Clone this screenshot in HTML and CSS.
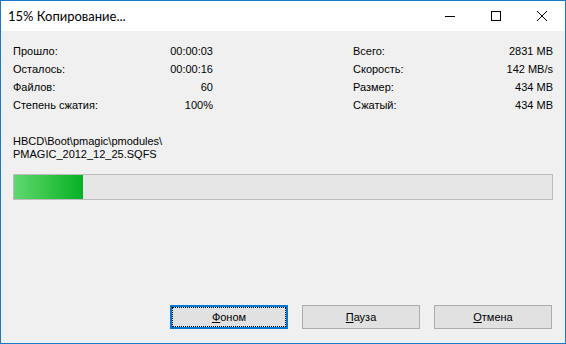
FILE: index.html
```html
<!DOCTYPE html>
<html>
<head>
	<title>15% Копирование...</title>
	<link rel="stylesheet" href="styles.css">
</head>
<body>
	<div class="window">
		<div class="titlebar">
			<span class="title">15% Копирование...</span>
			<div class="controls">
				<div class="ctl">
					<svg width="10" height="10" viewBox="0 0 10 10"><path d="M0 5.5H10" stroke="#000" stroke-width="1"/></svg>
				</div>
				<div class="ctl">
					<svg width="10" height="10" viewBox="0 0 10 10"><rect x="0.5" y="0.5" width="9" height="9" fill="none" stroke="#000" stroke-width="1"/></svg>
				</div>
				<div class="ctl">
					<svg width="10" height="10" viewBox="0 0 10 10"><path d="M0 0L10 10M10 0L0 10" stroke="#000" stroke-width="1"/></svg>
				</div>
			</div>
		</div>

		<div class="content">
			<div class="stats">
				<div class="group">
					<div class="row"><span>Прошло:</span><span>00:00:03</span></div>
					<div class="row"><span>Осталось:</span><span>00:00:16</span></div>
					<div class="row"><span>Файлов:</span><span>60</span></div>
					<div class="row"><span>Степень сжатия:</span><span>100%</span></div>
				</div>
				<div class="group">
					<div class="row"><span>Всего:</span><span>2831 MB</span></div>
					<div class="row"><span>Скорость:</span><span>142 MB/s</span></div>
					<div class="row"><span>Размер:</span><span>434 MB</span></div>
					<div class="row"><span>Сжатый:</span><span>434 MB</span></div>
				</div>
			</div>

			<div class="path">
				HBCD\Boot\pmagic\pmodules\<br>
				PMAGIC_2012_12_25.SQFS
			</div>

			<div class="progress">
				<div class="fill" style="width: 69px"></div>
			</div>

			<div class="buttons">
				<button class="btn focused"><span class="focus-rect"><u>Ф</u>оном</span></button>
				<button class="btn"><span class="focus-rect"><u>П</u>ауза</span></button>
				<button class="btn"><span class="focus-rect"><u>О</u>тмена</span></button>
			</div>
		</div>
	</div>
</body>
</html>
```

FILE: styles.css
```css
/* 7-Zip style copy dialog */
body, html {
	margin: 0;
	padding: 0;
	background: #fff;
}

.window {
	width: 566px;
	height: 344px;
	box-sizing: border-box;
	border: 1px solid #1979ca;
	display: flex;
	flex-direction: column;
	font-family: "Liberation Sans", Arial, sans-serif;
	font-size: 11px;
	color: #000;
}

.titlebar {
	height: 30px;
	background: #fff;
	display: flex;
	align-items: center;
	justify-content: space-between;
}

.title {
	padding-left: 7px;
	font-family: Lato, "Noto Sans", sans-serif;
	font-size: 13px;
	color: #000;
}

.controls {
	display: flex;
	height: 100%;
}

.ctl {
	width: 46px;
	height: 100%;
	display: flex;
	align-items: center;
	justify-content: center;
}

.ctl svg {
	display: block;
	shape-rendering: crispEdges;
}

.content {
	flex: 1;
	background: #f0f0f0;
	display: flex;
	flex-direction: column;
	padding: 11px 12px 14px 12px;
}

.stats {
	display: grid;
	grid-template-columns: 200px 200px;
	justify-content: space-between;
}

.row {
	display: flex;
	justify-content: space-between;
	line-height: 18px;
	height: 18px;
}

.path {
	margin-top: 21px;
	line-height: 13px;
}

.progress {
	margin-top: 13px;
	height: 26px;
	box-sizing: border-box;
	border: 1px solid #bcbcbc;
	background: #e6e6e6;
}

.fill {
	height: 100%;
	background: linear-gradient(90deg, #5fd86e 0%, #3ec94f 40%, #06b025 100%);
}

.buttons {
	margin-top: auto;
	margin-right: 1px;
	display: flex;
	justify-content: flex-end;
	gap: 14px;
}

.btn {
	width: 118px;
	height: 24px;
	box-sizing: border-box;
	padding: 1px;
	border: 1px solid #adadad;
	background: #e1e1e1;
	font-family: "Liberation Sans", Arial, sans-serif;
	font-size: 11px;
	color: #000;
	display: flex;
}

.focus-rect {
	flex: 1;
	display: flex;
	align-items: center;
	justify-content: center;
	border: 1px dotted transparent;
}

.btn.focused {
	border: 2px solid #0078d7;
	padding: 0;
}

.btn.focused .focus-rect {
	border-color: #000;
}
```
